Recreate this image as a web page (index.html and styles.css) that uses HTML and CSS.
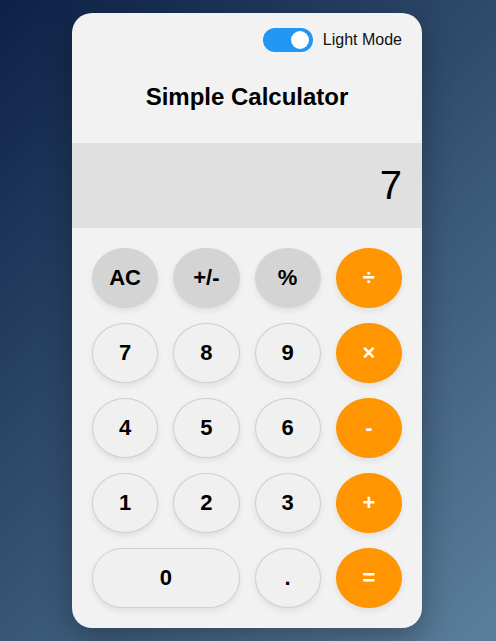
FILE: index.html
```html
<!DOCTYPE html>
<html lang="en">
<head>
<meta charset="utf-8">
<title>Simple Calculator</title>
<link rel="stylesheet" href="styles.css">
</head>
<body>
<div class="calculator">
  <div class="mode-row">
    <label class="switch"><span class="knob"></span></label>
    <span class="mode-label">Light Mode</span>
  </div>
  <h1 class="title">Simple Calculator</h1>
  <div class="display">7</div>
  <div class="keys">
    <button class="key fn">AC</button>
    <button class="key fn">+/-</button>
    <button class="key fn">%</button>
    <button class="key op">÷</button>
    <button class="key">7</button>
    <button class="key">8</button>
    <button class="key">9</button>
    <button class="key op">×</button>
    <button class="key">4</button>
    <button class="key">5</button>
    <button class="key">6</button>
    <button class="key op">-</button>
    <button class="key">1</button>
    <button class="key">2</button>
    <button class="key">3</button>
    <button class="key op">+</button>
    <button class="key zero">0</button>
    <button class="key">.</button>
    <button class="key op">=</button>
  </div>
</div>
</body>
</html>
```
FILE: styles.css
```css
* { box-sizing: border-box; }
html, body { height: 100%; }
body {
  margin: 0;
  padding-right: 2px;
  font-family: "Liberation Sans", Arial, sans-serif;
  background: linear-gradient(135deg, #0c2146 0%, #5b7f9b 100%);
  display: flex;
  justify-content: center;
  align-items: flex-start;
}
.calculator {
  margin-top: 13px;
  width: 350px;
  background: #f2f2f2;
  border-radius: 20px;
  overflow: hidden;
  box-shadow: 0 10px 30px rgba(0,0,0,0.3);
}
.mode-row {
  display: flex;
  justify-content: flex-end;
  align-items: center;
  gap: 10px;
  padding: 15px 20px 0;
}
.switch {
  width: 50px;
  height: 24px;
  border-radius: 12px;
  background: #2196f3;
  position: relative;
  display: block;
}
.knob {
  position: absolute;
  right: 4px;
  top: 3px;
  width: 18px;
  height: 18px;
  border-radius: 50%;
  background: #fff;
}
.mode-label {
  font-size: 16px;
  color: #111;
}
.title {
  margin: 0;
  padding: 31px 0 32px;
  text-align: center;
  font-size: 24px;
  font-weight: bold;
  color: #000;
  line-height: 28px;
}
.display {
  height: 85px;
  background: #e0e0e0;
  text-align: right;
  padding: 0 20px;
  font-size: 40px;
  line-height: 85px;
  color: #000;
}
.keys {
  display: grid;
  grid-template-columns: repeat(4, 1fr);
  gap: 15px;
  padding: 20px;
}
.key {
  height: 60px;
  border-radius: 50%;
  border: 1px solid #cfcfcf;
  background: #f0f0f0;
  font-family: "Liberation Sans", Arial, sans-serif;
  font-size: 22px;
  font-weight: bold;
  color: #000;
  box-shadow: 0 3px 6px rgba(0,0,0,0.08);
  padding: 0;
}
.key.fn {
  background: #d4d4d4;
  border-color: #d4d4d4;
}
.key.op {
  background: #ff9500;
  border-color: #ff9500;
  color: #fff;
}
.key.zero {
  grid-column: span 2;
  border-radius: 30px;
}
```
